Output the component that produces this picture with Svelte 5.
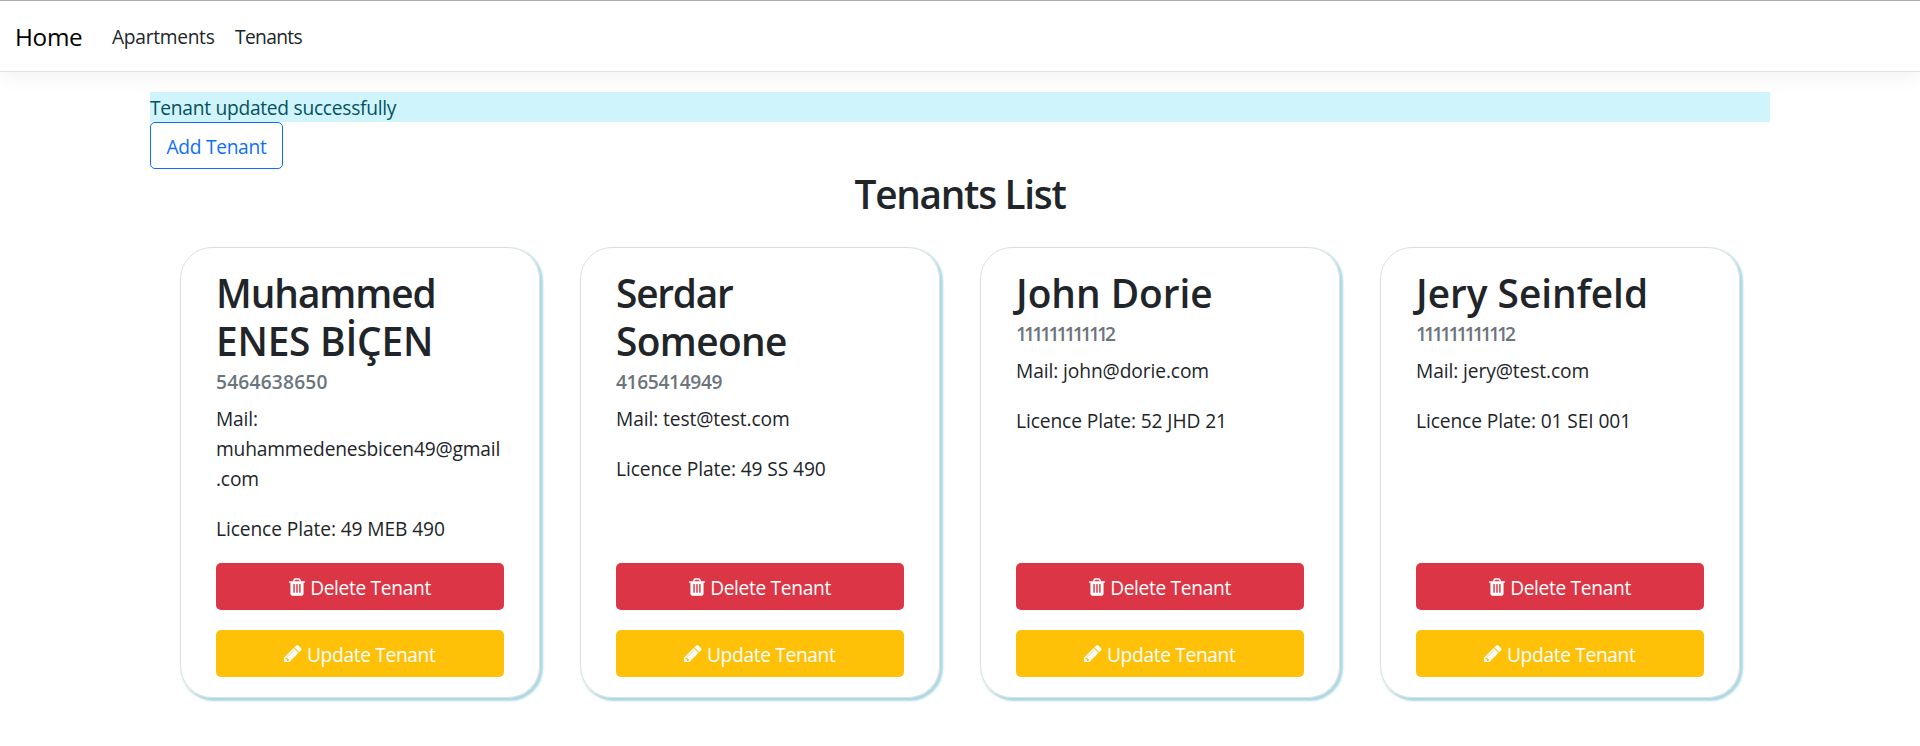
<script>
  const tenants = [
    { first: 'Muhammed', last: 'ENES BİÇEN', fit: 'long', phone: '5464638650', mail: 'muhammedenesbicen49@gmail.com', plate: '49 MEB 490' },
    { first: 'Serdar', last: 'Someone', fit: 'medium', phone: '4165414949', mail: 'test@test.com', plate: '49 SS 490' },
    { first: 'John', last: 'Dorie', fit: 'short', phone: '111111111112', mail: 'john@dorie.com', plate: '52 JHD 21' },
    { first: 'Jery', last: 'Seinfeld', fit: 'short', phone: '111111111112', mail: 'jery@test.com', plate: '01 SEI 001' }
  ];
</script>

<nav>
  <a class="brand" href="#home">Home</a>
  <a class="link apartments" href="#apartments">Apartments</a>
  <a class="link tenants" href="#tenants">Tenants</a>
</nav>

<main>
  <div class="alert">Tenant updated successfully</div>
  <a class="add" href="#add">Add Tenant</a>
  <h1>Tenants List</h1>
  <section class="cards">
    {#each tenants as t}
      <article class={t.fit}>
        <h2><span class="first">{t.first}</span> <span class="last">{t.last}</span></h2>
        <h6>{t.phone}</h6>
        <p class="mail">Mail: {t.mail}</p>
        <p class="plate">Licence Plate: {t.plate}</p>
        <div class="actions">
          <button class="delete">
            <svg width="16" height="18" viewBox="0 0 1408 1536" fill="currentColor"><path d="M512 1248V544q0-14-9-23t-23-9h-64q-14 0-23 9t-9 23v704q0 14 9 23t23 9h64q14 0 23-9t9-23zm256 0V544q0-14-9-23t-23-9h-64q-14 0-23 9t-9 23v704q0 14 9 23t23 9h64q14 0 23-9t9-23zm256 0V544q0-14-9-23t-23-9h-64q-14 0-23 9t-9 23v704q0 14 9 23t23 9h64q14 0 23-9t9-23zM480 256h448l-48-117q-7-9-17-11H546q-10 2-17 11zm928 32v64q0 14-9 23t-23 9h-96v948q0 83-47 143.500t-113 60.500H288q-66 0-113-58.500T128 1336V384H32q-14 0-23-9t-9-23v-64q0-14 9-23t23-9h309l70-167q15-37 54-63t79-26h320q40 0 79 26t54 63l70 167h309q14 0 23 9t9 23z"/></svg>
            <span>Delete Tenant</span>
          </button>
          <button class="update">
            <svg width="17.5" height="17.5" viewBox="0 0 1515 1515" fill="currentColor"><path d="M363 1387l91-91-235-235-91 91v107h128v128h107zM886 459q0-22-22-22-10 0-17 7L305 986q-7 7-7 17 0 22 22 22 10 0 17-7l542-542q7-7 7-17zM832 267l416 416-832 832H0v-416zM1515 363q0 53-37 90l-166 166-416-416 166-165q36-38 90-38 53 0 91 38l235 234q37 39 37 91z"/></svg>
            <span>Update Tenant</span>
          </button>
        </div>
      </article>
    {/each}
  </section>
</main>

<style>
  :global(body) {
    background: #fff;
    color: #212529;
    font: 400 19.2px/30px "Open Sans", "Noto Sans", sans-serif;
  }
  :global(#app) { overflow: hidden; height: 746px; }
  h1, h2, h6, p { margin: 0; }
  a { text-decoration: none; }
  nav {
    box-sizing: border-box;
    height: 72px;
    display: flex;
    align-items: center;
    padding: 2px 0 0 15px;
    border-top: 1px solid #a9abb8;
    border-bottom: 1px solid #dee2e6;
    box-shadow: 0 8px 16px rgba(0, 0, 0, 0.045);
  }
  nav a { color: #212529; }
  .brand { font-size: 24.3px; width: 97px; color: #000; letter-spacing: -0.3px; }
  .apartments { width: 123px; letter-spacing: -0.3px; }
  .tenants { letter-spacing: -0.65px; }
  main { width: 1620px; margin: 20px auto 0; }
  .alert {
    box-sizing: border-box;
    height: 30px;
    padding-top: 1px;
    background: #cff4fc;
    color: #055160;
    letter-spacing: -0.27px;
  }
  .add {
    box-sizing: border-box;
    display: flex;
    align-items: center;
    justify-content: center;
    width: 133px;
    height: 47px;
    padding-top: 2px;
    border: 1px solid #0d6efd;
    border-radius: 5px;
    color: #0d6efd;
    letter-spacing: -0.3px;
  }
  h1, h2 { font-size: 38.8px; line-height: 48px; font-weight: 600; }
  h1 { text-align: center; padding-top: 1px; letter-spacing: -1.3px; }
  .long .first { letter-spacing: -1.05px; }
  .long .last { letter-spacing: -0.2px; }
  .medium .first { letter-spacing: -1.2px; }
  .medium .last { letter-spacing: -0.6px; }
  .short h2 { letter-spacing: 0; }
  .cards { display: grid; grid-template-columns: repeat(4, 360px); gap: 40px; padding: 29px 30px 0; }
  article {
    box-sizing: border-box;
    height: 451px;
    display: flex;
    flex-direction: column;
    padding: 20px 35px;
    border: 1px solid #dcdfdf;
    border-radius: 32px;
    box-shadow: 2px 2px 2px 1px lightblue;
  }
  h2 { padding-top: 1px; }
  h6 {
    margin: 5px 0 10px;
    color: #6c757d;
    font-size: 19.2px;
    line-height: 24px;
    font-weight: 600;
    letter-spacing: 0.2px;
  }
  .medium h6 { letter-spacing: -0.35px; }
  .short h6 { letter-spacing: -2.87px; }
  p { margin-bottom: 20px; overflow-wrap: anywhere; letter-spacing: -0.1px; }
  .plate { margin-bottom: 19px; }
  .long .mail { letter-spacing: -0.17px; padding-right: 3px; }
  .actions { margin-top: auto; display: grid; gap: 20px; }
  button {
    height: 47px;
    padding: 0;
    border: 0;
    border-radius: 5px;
    display: flex;
    align-items: center;
    justify-content: center;
    gap: 5px;
    color: #fff;
    font: inherit;
    letter-spacing: -0.35px;
  }
  button span { padding-top: 2px; }
  .delete { background: #dc3545; }
  .update { background: #ffc107; }
</style>
